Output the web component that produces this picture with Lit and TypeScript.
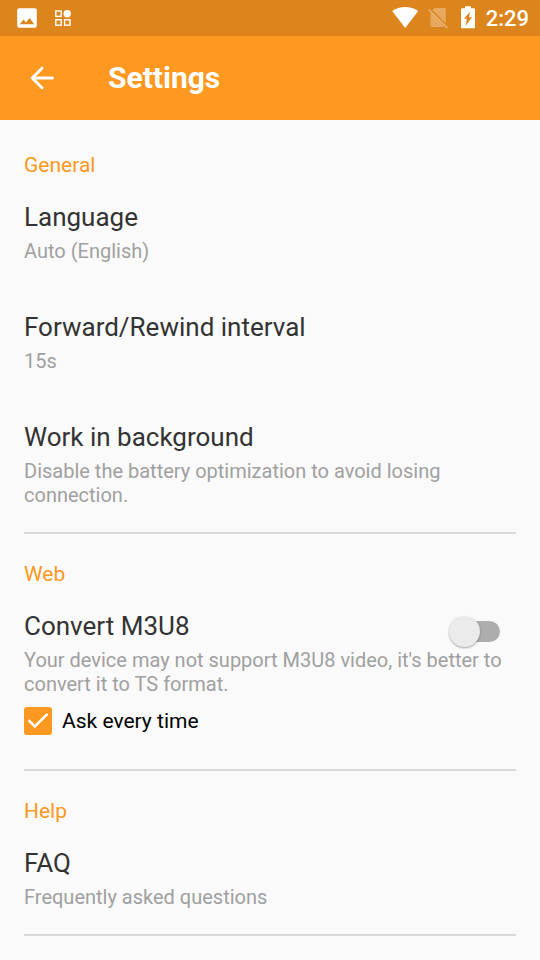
import { LitElement, html, css, nothing } from "lit";
import { customElement, property, state } from "lit/decorators.js";

@customElement("status-bar")
class StatusBar extends LitElement {
  static styles = css`
    :host {
      display: flex;
      align-items: center;
      justify-content: space-between;
      height: 36px;
      padding: 0 11px 0 16px;
      background: #dd851d;
      color: #fff;
      font: 500 22px/34px Roboto, sans-serif;
    }
    .group {
      display: flex;
      align-items: center;
    }
    .left {
      gap: 16px;
    }
    .right {
      gap: 8px;
    }
    svg {
      display: block;
    }
    .time {
      padding: 2px 0 0 1px;
    }
  `;
  render() {
    return html`
      <div class="group left">
        <svg width="22" height="22" viewBox="0 0 22 22" aria-hidden="true">
          <path
            fill="#fff"
            fill-rule="evenodd"
            d="M3.2 1.2h15.600a2 2 0 0 1 2 2v15.600a2 2 0 0 1-2 2H3.200a2 2 0 0 1-2-2V3.200a2 2 0 0 1 2-2zM3.800 17.200h14.400l-4.600-6.200-3.600 4.600-2.500-3z"
          />
        </svg>
        <svg width="18" height="18" viewBox="0 0 18 18" aria-hidden="true">
          <g fill="none" stroke="#fff" stroke-width="1.400">
            <rect x="1.800" y="2" width="5.400" height="5.400" />
            <rect x="1.800" y="10.800" width="5.400" height="5.400" />
            <rect x="10.600" y="10.800" width="5.400" height="5.400" />
          </g>
          <circle cx="13.200" cy="4.800" r="3.700" fill="#fff" />
        </svg>
      </div>
      <div class="group right">
        <svg width="28" height="24" viewBox="0 0 28 24" aria-hidden="true">
          <path fill="#fff" d="M14.200 22 1.200 5C5 2.200 9.500 1 14.200 1s9.200 1.200 13 4z" />
        </svg>
        <svg width="24" height="24" viewBox="0 0 24 24" aria-hidden="true">
          <path
            fill="#fff"
            fill-opacity=".3"
            d="M7.500 2H17.200a1.600 1.600 0 0 1 1.600 1.600V17.500L5.400 4.100zM3.500 6.500 18 21H5.100a1.600 1.600 0 0 1-1.600-1.600z"
          />
          <path d="M1.500 3.500 20.500 22" stroke="#fff" stroke-opacity=".4" stroke-width="1.500" />
        </svg>
        <svg width="18" height="24" viewBox="3 0 18 24" aria-hidden="true">
          <path
            fill="#fff"
            fill-rule="evenodd"
            d="M9 0.300h6v2h3a1 1 0 0 1 1 1v18a1 1 0 0 1-1 1H6a1 1 0 0 1-1-1v-18a1 1 0 0 1 1-1h3zM14 5.800 8 12.800h2.800l-1 7L16 11.200h-3z"
          />
        </svg>
        <span class="time">2:29</span>
      </div>
    `;
  }
}

@customElement("app-bar")
class AppBar extends LitElement {
  @property() heading = "";
  static styles = css`
    :host {
      display: flex;
      align-items: center;
      gap: 48px;
      height: 84px;
      padding: 0 24px;
      background: #fd9820;
      color: #fff;
    }
    .back {
      display: flex;
      padding: 0;
      border: 0;
      background: none;
      color: inherit;
      cursor: pointer;
    }
    .heading {
      margin: 0;
      font: 700 30px/36px Roboto, sans-serif;
    }
  `;
  render() {
    return html`
      <button class="back" aria-label="Back">
        <svg width="36" height="36" viewBox="0 0 36 36" aria-hidden="true">
          <path
            d="M28.500 18H8.500M18 8.200 8.200 18 18 27.800"
            fill="none"
            stroke="#fff"
            stroke-width="3"
            stroke-linecap="round"
            stroke-linejoin="round"
          />
        </svg>
      </button>
      <h1 class="heading">${this.heading}</h1>
    `;
  }
}

interface Item {
  title: string;
  note: string;
  toggle?: boolean;
}

const sections: { name: string; items: Item[] }[] = [
  {
    name: "General",
    items: [
      { title: "Language", note: "Auto (English)" },
      { title: "Forward/Rewind interval", note: "15s" },
      {
        title: "Work in background",
        note: "Disable the battery optimization to avoid losing connection.",
      },
    ],
  },
  {
    name: "Web",
    items: [
      {
        title: "Convert M3U8",
        note: "Your device may not support M3U8 video, it's better to convert it to TS format.",
        toggle: true,
      },
    ],
  },
  { name: "Help", items: [{ title: "FAQ", note: "Frequently asked questions" }] },
];

@customElement("app-root")
class AppRoot extends LitElement {
  @state() private convert = false;
  @state() private ask = true;

  static styles = css`
    :host {
      display: block;
      min-height: 100vh;
      background: #fafafa;
      color: #333;
      font-family: Roboto, sans-serif;
    }
    main {
      padding: 5px 24px 0;
    }
    .section {
      display: flex;
      flex-direction: column;
      padding: 28px 0 25px;
      border-bottom: 2px solid #d9d9d9;
    }
    .name {
      margin: 0 0 24px;
      color: #fd9820;
      font-size: 21px;
      font-weight: 400;
      line-height: 24px;
    }
    .items {
      display: flex;
      flex-direction: column;
      gap: 48px;
    }
    .item {
      display: flex;
      flex-direction: column;
      gap: 6px;
      width: 100%;
      padding: 0;
      border: 0;
      background: none;
      color: inherit;
      font: inherit;
      text-align: left;
    }
    button.item {
      cursor: pointer;
    }
    .row {
      display: flex;
      justify-content: space-between;
    }
    .title {
      font-size: 26px;
      line-height: 32px;
    }
    .note {
      color: #a0a0a0;
      font-size: 20px;
      line-height: 24px;
    }
    .switch {
      appearance: none;
      display: grid;
      align-items: center;
      width: 51px;
      height: 32px;
      margin: 5px 16px -5px 0;
    }
    .switch::before,
    .switch::after {
      content: "";
      grid-area: 1 / 1;
    }
    .switch::before {
      justify-self: end;
      width: 43px;
      height: 21px;
      border-radius: 11px;
      background: #adadad;
    }
    .switch::after {
      z-index: 1;
      width: 31px;
      height: 31px;
      border-radius: 50%;
      background: #ebebeb;
      box-shadow: 0 1px 2px rgba(0, 0, 0, 0.35);
    }
    .switch:checked::before {
      justify-self: start;
      background: #fecb8f;
    }
    .switch:checked::after {
      justify-self: end;
      background: #fd9820;
    }
    .ask {
      display: flex;
      align-items: center;
      gap: 10px;
      align-self: flex-start;
      padding: 5px 0 9px;
      color: #000;
      font-size: 21px;
      line-height: 28px;
    }
    .tick {
      appearance: none;
      width: 28px;
      height: 28px;
      margin: 0;
      border: 2px solid #fd9820;
      border-radius: 3px;
    }
    .tick:checked {
      background: #fd9820;
    }
    .box {
      display: grid;
    }
    .box > * {
      grid-area: 1 / 1;
    }
    .mark {
      pointer-events: none;
    }
  `;

  private renderItem(item: Item) {
    if (!item.toggle) {
      return html`<button class="item">
        <span class="title">${item.title}</span>
        <span class="note">${item.note}</span>
      </button>`;
    }
    return html`<div class="item">
      <div class="row">
        <label class="title" for="convert">${item.title}</label>
        <input
          class="switch"
          id="convert"
          type="checkbox"
          role="switch"
          .checked=${this.convert}
          @change=${(e: Event) => (this.convert = (e.target as HTMLInputElement).checked)}
        />
      </div>
      <span class="note">${item.note}</span>
      <label class="ask">
        <span class="box">
          <input
            class="tick"
            type="checkbox"
            .checked=${this.ask}
            @change=${(e: Event) => (this.ask = (e.target as HTMLInputElement).checked)}
          />
          ${this.ask
            ? html`<svg class="mark" width="28" height="28" viewBox="0 0 28 28" aria-hidden="true">
                <path d="M4.500 13.200 10.800 19.500 23.500 6.800" fill="none" stroke="#fff" stroke-width="2.600" />
              </svg>`
            : nothing}
        </span>
        Ask every time
      </label>
    </div>`;
  }

  render() {
    return html`
      <status-bar></status-bar>
      <app-bar heading="Settings"></app-bar>
      <main>
        ${sections.map(
          (s) => html`<section class="section">
            <h2 class="name">${s.name}</h2>
            <div class="items">${s.items.map((i) => this.renderItem(i))}</div>
          </section>`
        )}
      </main>
    `;
  }
}
